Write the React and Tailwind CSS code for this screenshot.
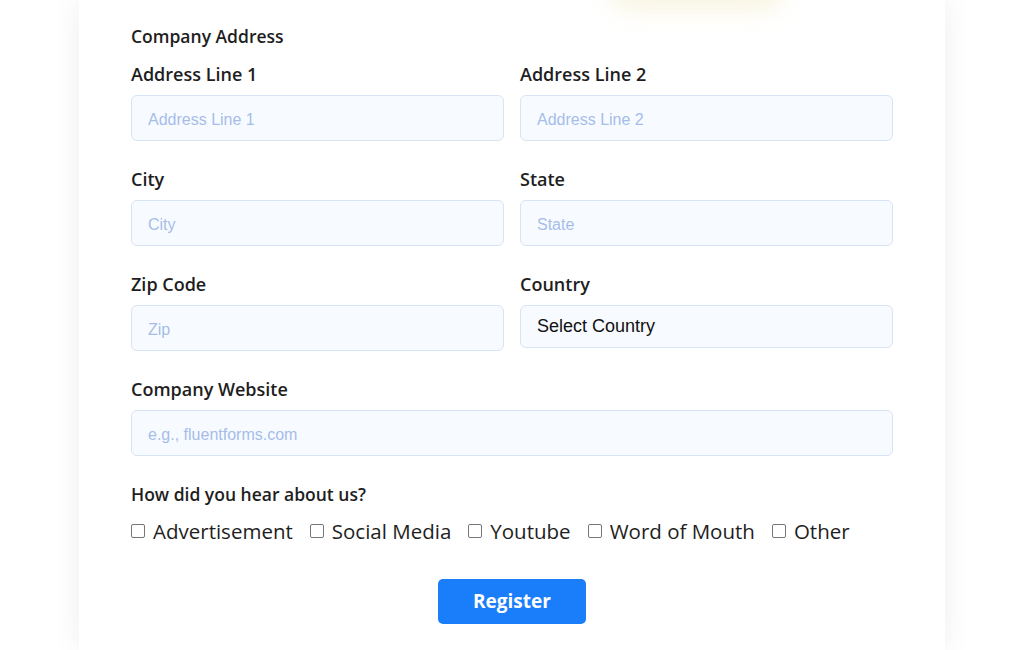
import React from 'react';

const labelFont = { fontFamily: '"Open Sans", Lato, sans-serif' };

const Field = ({ label, placeholder }) => (
    <div className="flex flex-col">
        <label className="text-[18px] leading-[24px] font-semibold text-[#1e1e1e] mb-[9px]">{label}</label>
        <input
            type="text"
            placeholder={placeholder}
            className="h-[46px] w-full rounded-[6px] border border-[#d6e4f6] bg-[#f7fbff] px-4 pt-[3px] text-[16px] text-[#1e1e1e] placeholder:text-[#a6bde9] focus:outline-none"
            style={{ fontFamily: '"Liberation Sans", Arial, sans-serif' }}
        />
    </div>
);

const options = ['Advertisement', 'Social Media', 'Youtube', 'Word of Mouth', 'Other'];

const App = () => {
    return (
        <div className="relative w-full h-[650px] overflow-hidden bg-white flex justify-center" style={labelFont}>
            <div className="relative w-[866px] h-full bg-white shadow-[0_0_28px_rgba(0,0,0,0.07)] px-[52px] pt-[24px]">
                <div className="absolute top-[-36px] left-[530px] w-[176px] h-[46px] rounded-full bg-[#efe8bc] blur-[12px] opacity-45" />

                <h3 className="text-[17.5px] leading-[24px] font-semibold text-[#1e1e1e] mb-[14px]">Company Address</h3>

                <div className="grid grid-cols-2 gap-x-4 gap-y-[26px]">
                    <Field label="Address Line 1" placeholder="Address Line 1" />
                    <Field label="Address Line 2" placeholder="Address Line 2" />
                    <Field label="City" placeholder="City" />
                    <Field label="State" placeholder="State" />
                    <Field label="Zip Code" placeholder="Zip" />
                    <div className="flex flex-col">
                        <label className="text-[18px] leading-[24px] font-semibold text-[#1e1e1e] mb-[9px]">Country</label>
                        <div
                            className="h-[43px] w-full rounded-[6px] border border-[#d6e4f6] bg-[#f7fbff] px-4 flex items-center text-[18px] text-[#111]"
                            style={{ fontFamily: '"Liberation Sans", Arial, sans-serif' }}
                        >
                            Select Country
                        </div>
                    </div>
                    <div className="col-span-2">
                        <Field label="Company Website" placeholder="e.g., fluentforms.com" />
                    </div>
                </div>

                <div className="mt-[26px]">
                    <div className="text-[17.5px] leading-[24px] font-semibold text-[#1e1e1e]">How did you hear about us?</div>
                    <div className="flex items-center gap-[17px] mt-[11px]">
                        {options.map(o => (
                            <label key={o} className="flex items-center gap-[8px] text-[20.5px] leading-[28px] text-[#1e1e1e]">
                                <span className="w-[14px] h-[14px] rounded-[2px] border border-[#767676] bg-white" />
                                {o}
                            </label>
                        ))}
                    </div>
                </div>

                <div className="flex justify-center mt-[34px]">
                    <button className="w-[148px] h-[45px] rounded-[5px] bg-[#1a7efb] text-white text-[19px] font-bold">
                        Register
                    </button>
                </div>
            </div>
        </div>
    );
};

export default App;
